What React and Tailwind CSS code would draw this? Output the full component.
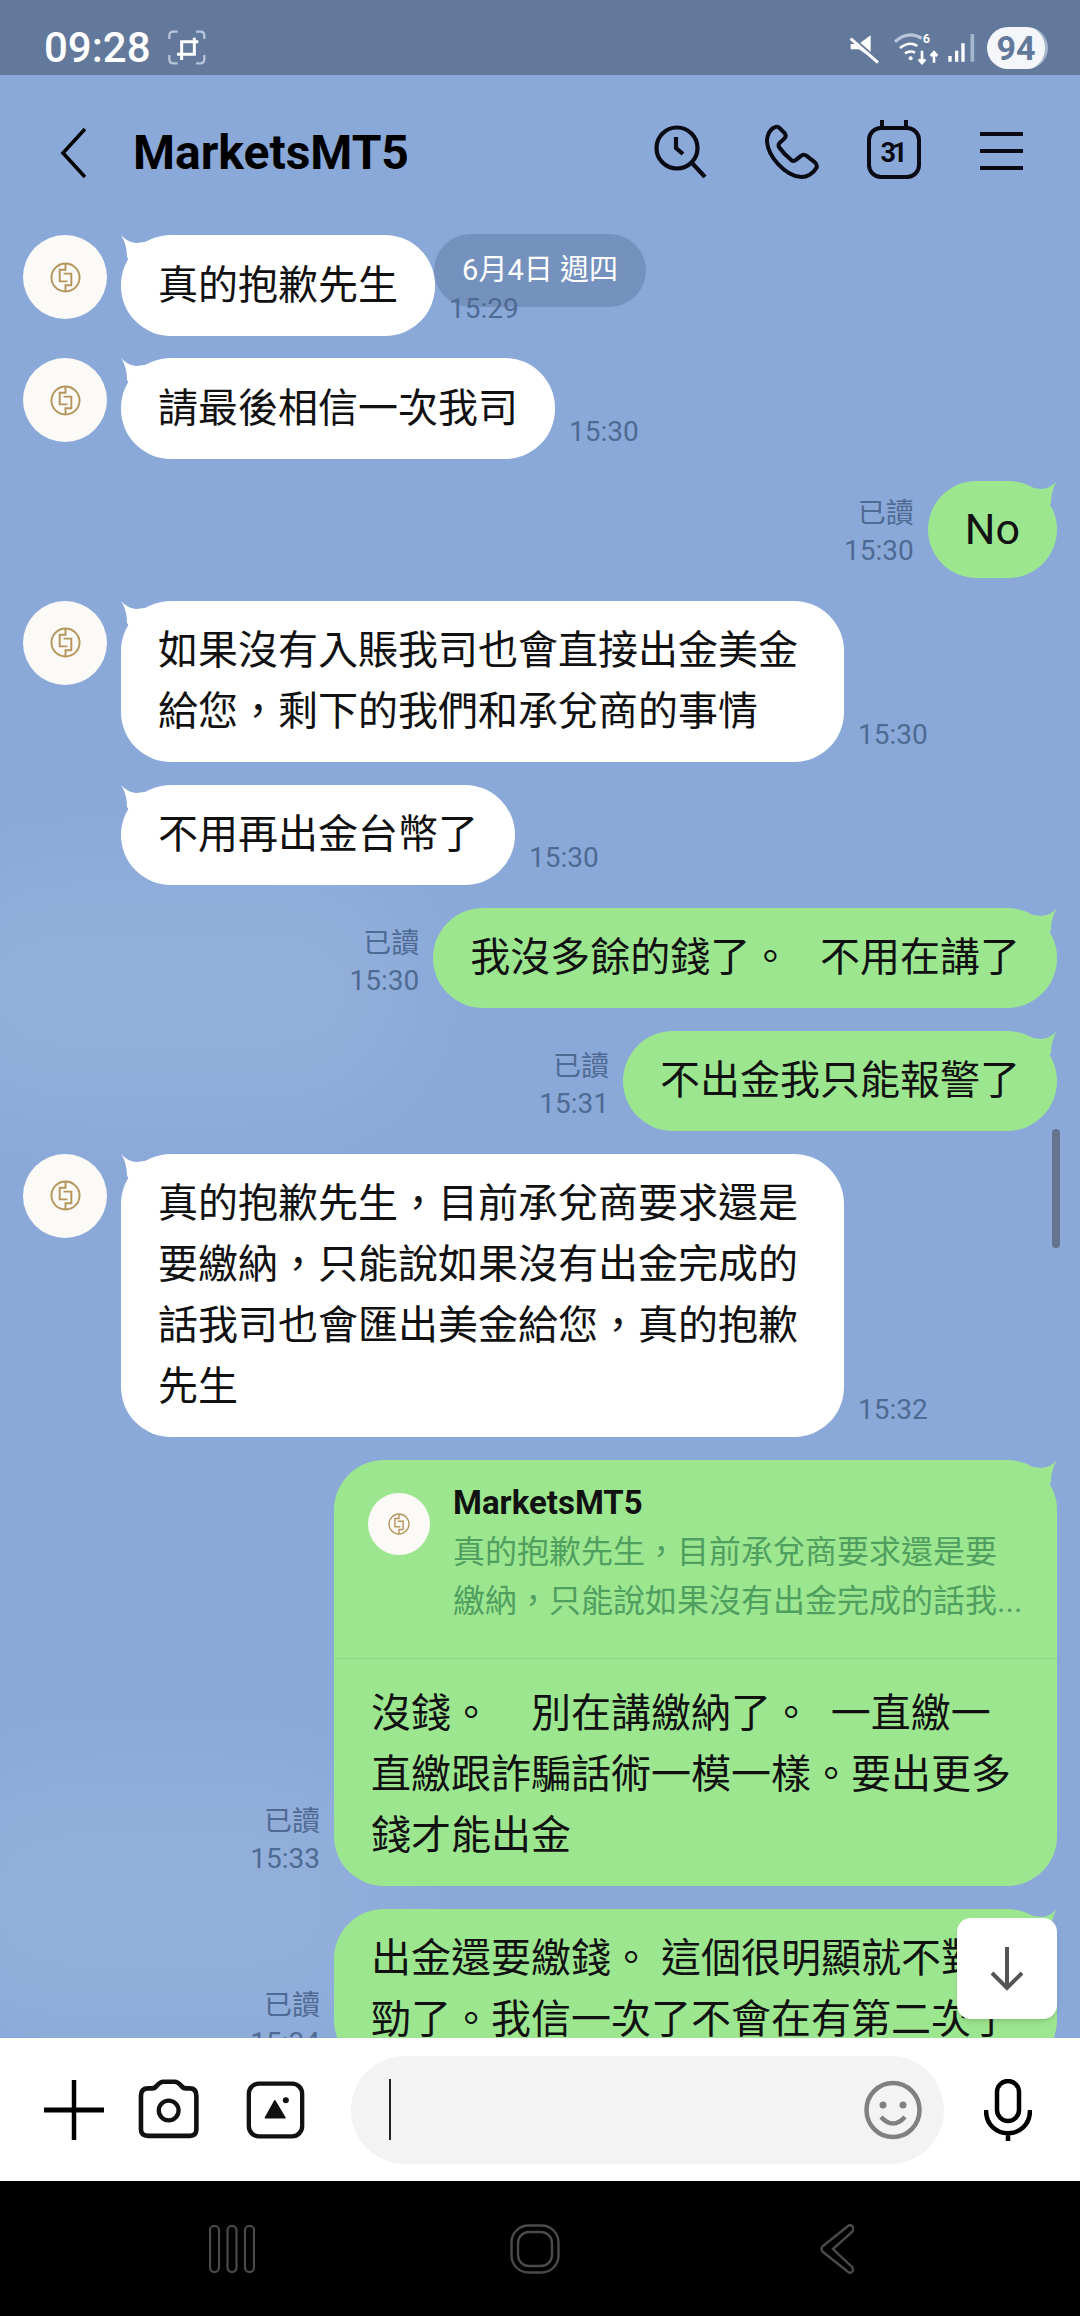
import React from 'react';

const Avatar = ({ small }) => (
    <div className={`flex shrink-0 items-center justify-center rounded-full bg-[#fbfaf6] ${small ? 'h-[62px] w-[62px]' : 'h-[84px] w-[84px]'}`}>
        <svg viewBox="0 0 32 32" className={small ? 'h-[22px] w-[22px]' : 'h-[31px] w-[31px]'} fill="none" stroke="#b4955c" strokeWidth="2">
            <circle cx="16" cy="16" r="14.5" />
            <path d="M16 2V8H10V20H18M16 30V24H22V12H14" />
        </svg>
    </div>
);

const Tail = ({ fill, right }) => (
    <svg viewBox="0 0 30 30" className={`absolute top-0 h-[30px] w-[30px] ${right ? 'right-0 -scale-x-100' : 'left-0'}`} fill={fill}>
        <path d="M0 0C4 4 9 8 16 8L30 6V30H12L6 22C6 14 4 6 0 0Z" />
    </svg>
);

const Bubble = ({ lines, sent, wide, compact }) => (
    <div className={`relative ${wide ? 'w-[723px]' : ''}`}>
        <Tail right={sent} fill={sent ? '#9de690' : '#ffffff'} />
        <div className={`relative whitespace-pre rounded-[50px] px-[37px] leading-[61px] text-[#111111] ${compact ? 'py-[18px] text-[43px]' : 'py-[19.75px] text-[40px]'} ${sent ? 'bg-[#9de690]' : 'bg-white'}`}>
            {lines.map((line) => (
                <div key={line}>{line}</div>
            ))}
        </div>
    </div>
);

const Received = ({ lines, time, showAvatar = true, wide }) => (
    <div className="relative flex items-start pl-[23px]">
        <div className="w-[84px] shrink-0">{showAvatar && <Avatar />}</div>
        <div className="ml-[14px]">
            <Bubble lines={lines} wide={wide} />
        </div>
        <div className="ml-[14px] self-end pb-[9px] text-[28px] leading-[37px] text-[#4f6a93]">{time}</div>
    </div>
);

const ReadMeta = ({ time }) => (
    <div className="mr-[14px] self-end pb-[9px] text-right text-[28px] leading-[37px] text-[#4f6a93]">
        <div>已讀</div>
        <div>{time}</div>
    </div>
);

const Sent = ({ lines, time, wide, compact }) => (
    <div className="relative flex items-start justify-end pr-[23px]">
        <ReadMeta time={time} />
        <Bubble lines={lines} sent wide={wide} compact={compact} />
    </div>
);

const ReplyBubble = () => (
    <div className="relative flex items-start justify-end pr-[23px]">
        <ReadMeta time="15:33" />
        <div className="relative w-[723px]">
            <Tail right fill="#9de690" />
            <div className="relative rounded-[50px] bg-[#9de690]">
                <div className="flex h-[199px] border-b border-b-[#90d884] pl-[34px] pt-[33px]">
                    <Avatar small />
                    <div className="ml-[23px] -mt-[10px]">
                        <div className="text-[33px] font-bold leading-[40px] text-[#111111]">MarketsMT5</div>
                        <div className="mt-[5px] whitespace-pre text-[32px] leading-[49px] text-[#4f9f5f]">
                            <div>真的抱歉先生，目前承兌商要求還是要</div>
                            <div>繳納，只能說如果沒有出金完成的話我...</div>
                        </div>
                    </div>
                </div>
                <div className="whitespace-pre px-[37px] pb-[20px] pt-[24.5px] text-[40px] leading-[61px] text-[#111111]">
                    <div>沒錢。　別在講繳納了。  一直繳一</div>
                    <div>直繳跟詐騙話術一模一樣。要出更多</div>
                    <div>錢才能出金</div>
                </div>
            </div>
        </div>
    </div>
);

const StatusBar = () => (
    <div className="flex h-[75px] shrink-0 items-center bg-[#62799b] pl-[44px] pr-[32px] pt-[20px]">
        <span className="text-[42px] font-medium leading-none text-white">09:28</span>
        <svg viewBox="0 0 150 135" className="ml-[10px] h-[45px] w-[50px]" fill="none">
            <path d="M25 42V32Q25 20 37 20H50M105 20H118Q130 20 130 32V42M25 90V102Q25 115 37 115H50M105 115H118Q130 115 130 102V90" stroke="#b7c4d9" strokeWidth="7" />
            <path d="M62 105V50H112M100 38V88H48" stroke="#ffffff" strokeWidth="9" />
        </svg>
        <svg viewBox="0 0 438 165" className="ml-auto h-[55px] w-[146px]" fill="none">
            <path d="M32 72H56L92 46V112L56 88H32Z" fill="#ffffff" />
            <path d="M34 54L116 126" stroke="#62799b" strokeWidth="14" />
            <path d="M32 56L114 128" stroke="#ffffff" strokeWidth="9" />
            <path d="M165 65Q205 30 245 55" stroke="#b7c4d9" strokeWidth="10" />
            <path d="M180 84Q208 62 232 78" stroke="#ffffff" strokeWidth="8" />
            <path d="M195 100Q210 90 225 98" stroke="#ffffff" strokeWidth="8" />
            <circle cx="212" cy="115" r="6" fill="#ffffff" />
            <text x="248" y="70" fontSize="38" fontWeight="700" fill="#ffffff" fontFamily="Roboto, sans-serif">6</text>
            <path d="M246 92V128M236 118L246 129L256 118M282 128V98M272 108L282 97L292 108" stroke="#ffffff" strokeWidth="8" />
            <path d="M330 108V125M350 92V125M369 70V125" stroke="#ffffff" strokeWidth="10" />
            <path d="M397 42V125" stroke="#a6b6cd" strokeWidth="11" />
        </svg>
        <div className="ml-[1px] flex h-[42px] w-[61px] items-center justify-center rounded-[21px] border-r-[3px] border-r-[#a6b6cd] bg-[#f4f6f9] text-[34px] font-bold leading-none text-[#62799b]">
            94
        </div>
    </div>
);

const ChatHeader = () => (
    <div className="flex h-[155px] shrink-0 items-center pl-[60px]">
        <svg viewBox="0 0 26 50" className="h-[50px] w-[26px]" fill="none" stroke="#000000" strokeWidth="3.6">
            <path d="M25 1L3 25L25 49" />
        </svg>
        <h1 className="ml-[47px] text-[48px] font-bold leading-none text-black">MarketsMT5</h1>
        <svg viewBox="0 0 54 53" className="mb-[2px] ml-auto h-[53px] w-[54px]" fill="none" stroke="#0a0a14" strokeWidth="4.2">
            <circle cx="23" cy="23" r="20.5" />
            <path d="M22 12V23L29 29M38 38L51 52" />
        </svg>
        <svg viewBox="370 42 165 170" className="ml-[57px] h-[57px] w-[55px]" fill="none" stroke="#0a0a14" strokeWidth="12">
            <path d="M402 50C385 55 375 75 376 95C380 140 430 195 475 200C495 202 515 190 525 172C527 165 524 160 518 155L495 137C488 132 482 133 477 138L462 150C458 153 452 152 448 149C435 138 422 125 413 112C410 107 410 102 414 98L428 85C433 80 433 74 429 69L412 52C408 49 405 49 402 50Z" />
        </svg>
        <svg viewBox="0 0 54 60" className="mb-[7px] ml-[47px] h-[60px] w-[54px]" fill="none" stroke="#0a0a14" strokeWidth="4">
            <rect x="2" y="9" width="50" height="49" rx="12" />
            <path d="M15 1V9M39 1V9" />
            <text x="27" y="43" textAnchor="middle" fontSize="27" fontWeight="700" fill="#0a0a14" stroke="none" fontFamily="Roboto, sans-serif" textLength="27">31</text>
        </svg>
        <div className="mb-[3px] ml-[59px] mr-[57px] flex w-[43px] flex-col gap-[13px]">
            <div className="h-[4px] bg-[#0a0a14]" />
            <div className="h-[4px] bg-[#0a0a14]" />
            <div className="h-[4px] bg-[#0a0a14]" />
        </div>
    </div>
);

const InputBar = () => (
    <div className="flex h-[143px] shrink-0 items-center bg-white pl-[44px]">
        <svg viewBox="0 0 60 60" className="h-[60px] w-[60px]" fill="none" stroke="#000000">
            <path d="M0 30H60" strokeWidth="5" />
            <path d="M30 0V60" strokeWidth="4.5" />
        </svg>
        <svg viewBox="322 40 194 184" className="ml-[33px] h-[61px] w-[64px]" fill="none" stroke="#111111" strokeWidth="14">
            <path d="M356 68H368Q376 68 382 60Q392 48 402 48H436Q446 48 456 60Q462 68 470 68H482Q502 68 502 90V192Q502 212 482 212H356Q334 212 334 192V90Q334 68 356 68Z" />
            <circle cx="418" cy="135" r="30" strokeWidth="13" />
        </svg>
        <svg viewBox="652 46 176 174" className="ml-[45px] h-[58px] w-[59px]" fill="none" stroke="#111111" strokeWidth="13">
            <rect x="660" y="54" width="160" height="158" rx="30" />
            <path d="M738 106L710 156H768Z" fill="#111111" strokeWidth="5" strokeLinejoin="round" stroke="#111111" />
            <circle cx="771" cy="104" r="9" fill="#111111" stroke="none" />
        </svg>
        <div className="ml-[46px] flex h-[108px] w-[593px] items-center rounded-[54px] bg-[#f3f3f3] pl-[38px] pr-[22px]">
            <div className="h-[61px] w-[2px] bg-[#222222]" />
            <svg viewBox="0 0 58 60" className="ml-auto h-[60px] w-[58px]" fill="none" stroke="#808080" strokeWidth="4.5">
                <ellipse cx="29" cy="30" rx="26.5" ry="27" />
                <circle cx="19" cy="25" r="3.5" fill="#808080" stroke="none" />
                <circle cx="39" cy="25" r="3.5" fill="#808080" stroke="none" />
                <path d="M17 37Q29 50 41 37" />
            </svg>
        </div>
        <svg viewBox="0 0 48 62" className="ml-[40px] h-[62px] w-[48px]" fill="none" stroke="#000000" strokeWidth="4.5">
            <rect x="13" y="2" width="22" height="40" rx="11" />
            <path d="M2 31C2 62 46 62 46 31M24 53V62" />
        </svg>
    </div>
);

const NavBar = () => (
    <div className="flex h-[135px] shrink-0 items-center bg-black pl-[209px]">
        <svg viewBox="0 0 46 48" className="h-[48px] w-[46px]" fill="none" stroke="#4a4a4a" strokeWidth="2.2">
            <rect x="1" y="1" width="9" height="46" rx="4.5" />
            <rect x="18.5" y="1" width="9" height="46" rx="4.5" />
            <rect x="36" y="1" width="9" height="46" rx="4.5" />
        </svg>
        <svg viewBox="0 0 50 50" className="ml-[255px] h-[50px] w-[50px]" fill="none" stroke="#4a4a4a" strokeWidth="2.4">
            <rect x="1.5" y="1.5" width="47" height="47" rx="17" />
            <rect x="8" y="8" width="34" height="34" rx="11" />
        </svg>
        <svg viewBox="0 0 34 50" className="ml-[260px] h-[50px] w-[34px]" fill="none" stroke="#4a4a4a" strokeWidth="2.4">
            <path d="M28 2Q31 0 33 3Q34 5 32 8L13 25L32 43Q34 46 32 48Q30 50 27 47L3 28Q0 25 3 22Z" />
        </svg>
    </div>
);

export default function App() {
    return (
        <div className="flex h-screen w-full flex-col overflow-hidden bg-[#8aa9d9] font-['Roboto','Noto_Sans_CJK_TC',sans-serif]">
            <StatusBar />
            <ChatHeader />
            <div className="relative min-h-0 flex-1 overflow-hidden pt-[5px]">
                {/* faint clouds in the wallpaper */}
                <div className="absolute left-[-80px] top-[630px] h-[260px] w-[500px] rounded-full bg-white/[0.07] blur-2xl" />
                <div className="absolute left-[-80px] top-[1530px] h-[280px] w-[480px] rounded-full bg-white/[0.07] blur-2xl" />

                <div className="absolute left-[434px] top-[4px] flex h-[73px] w-[212px] items-center justify-center rounded-[37px] bg-[#7591be] text-[29px] text-white">
                    6月4日 週四
                </div>

                <div className="flex flex-col gap-[22.5px]">
                    <Received lines={['真的抱歉先生']} time="15:29" />
                    <Received lines={['請最後相信一次我司']} time="15:30" />
                    <Sent lines={['No']} time="15:30" compact />
                    <Received lines={['如果沒有入賬我司也會直接出金美金', '給您，剩下的我們和承兌商的事情']} time="15:30" wide />
                    <Received lines={['不用再出金台幣了']} time="15:30" showAvatar={false} />
                    <Sent lines={['我沒多餘的錢了。   不用在講了']} time="15:30" />
                    <Sent lines={['不出金我只能報警了']} time="15:31" />
                    <Received
                        lines={['真的抱歉先生，目前承兌商要求還是', '要繳納，只能說如果沒有出金完成的', '話我司也會匯出美金給您，真的抱歉', '先生']}
                        time="15:32"
                        wide
                    />
                    <ReplyBubble />
                    <Sent lines={['出金還要繳錢。 這個很明顯就不對', '勁了。我信一次了不會在有第二次了']} time="15:34" wide />
                </div>

                <div className="absolute right-[20px] top-[899px] h-[119px] w-[8px] rounded-full bg-[#66738c]" />

                <div className="absolute right-[23px] top-[1688px] flex h-[101px] w-[100px] items-center justify-center rounded-[14px] bg-white shadow-md">
                    <svg viewBox="0 0 34 44" className="h-[44px] w-[34px]" fill="none" stroke="#555555" strokeWidth="4">
                        <path d="M17 0V41M2 26L17 41L32 26" />
                    </svg>
                </div>
            </div>
            <InputBar />
            <NavBar />
        </div>
    );
}
